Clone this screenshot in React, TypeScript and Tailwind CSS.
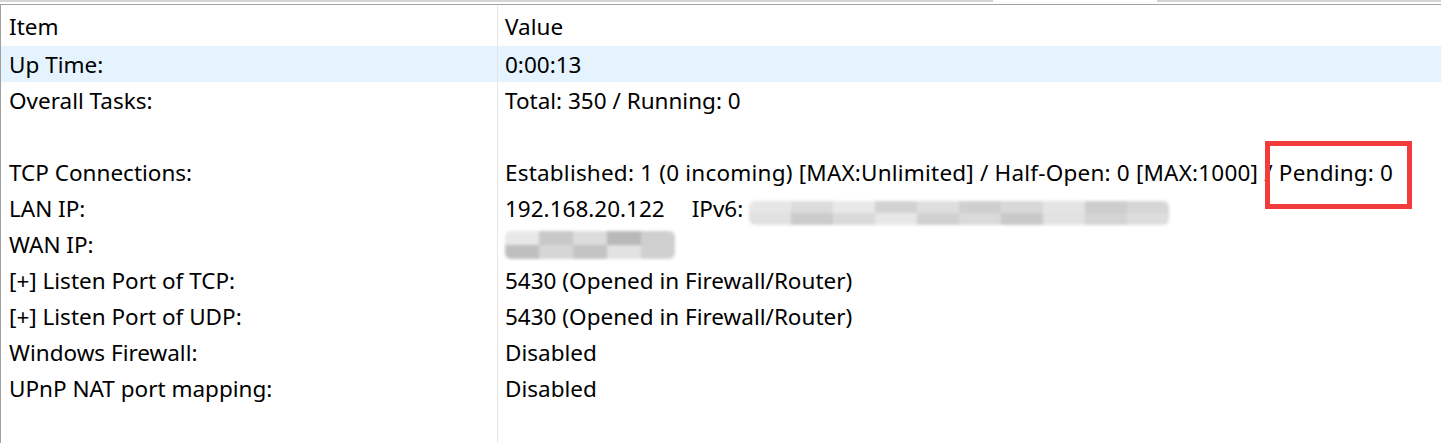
const ipv6Cells = ['#e6e6e6', '#dcdcdc', '#e9e9e9', '#d2d2d2', '#dedede', '#cfcfcf', '#d8d8d8', '#e4e4e4', '#cdcdcd', '#d6d6d6', '#e1e1e1', '#cbcbcb', '#d9d9d9', '#e7e7e7', '#d0d0d0', '#dadada', '#c9c9c9', '#e2e2e2', '#d4d4d4', '#dddddd'];
const wanCells = ['#e8e8e8', '#c8c8c8', '#dcdcdc', '#b9b9b9', '#cfcfcf', '#bfbfbf', '#d6d6d6', '#c4c4c4', '#e2e2e2', '#d0d0d0'];

function Pixelated({ cells, width, height }: { cells: string[]; width: number; height: number }) {
  const cw = width / (cells.length / 2);
  return (
    <span
      className="inline-grid align-middle blur-[1.5px] rounded-md overflow-hidden"
      style={{ width, height, gridTemplateColumns: `repeat(${cells.length / 2}, ${cw}px)` }}
    >
      {cells.map((c, i) => (
        <span key={i} style={{ background: c }} />
      ))}
    </span>
  );
}

export default function App() {
  const data: { item: string; value: React.ReactNode; hl?: boolean }[] = [
    { item: 'Up Time:', value: '0:00:13', hl: true },
    { item: 'Overall Tasks:', value: 'Total: 350 / Running: 0' },
    { item: '', value: '' },
    {
      item: 'TCP Connections:',
      value: (
        <span className="tracking-[0.2px]">
          Established: 1 (0 incoming) [MAX:Unlimited] / Half-Open: 0 [MAX:1000] / Pending: 0
        </span>
      ),
    },
    {
      item: 'LAN IP:',
      value: (
        <span className="flex items-center">
          <span>192.168.20.122</span>
          <span className="ml-[27px]">IPv6:</span>
          <span className="ml-[6px] mt-[4px]">
            <Pixelated cells={ipv6Cells} width={420} height={24} />
          </span>
        </span>
      ),
    },
    {
      item: 'WAN IP:',
      value: (
        <span className="flex items-center">
          <Pixelated cells={wanCells} width={170} height={28} />
        </span>
      ),
    },
    { item: '[+] Listen Port of TCP:', value: '5430 (Opened in Firewall/Router)' },
    { item: '[+] Listen Port of UDP:', value: '5430 (Opened in Firewall/Router)' },
    { item: 'Windows Firewall:', value: 'Disabled' },
    { item: 'UPnP NAT port mapping:', value: 'Disabled' },
  ];

  return (
    <div className="relative w-[1441px] h-[443px] bg-white overflow-hidden text-black text-[22.5px] font-['Segoe_UI','Noto_Sans',sans-serif]">
      {/* top strip */}
      <div className="flex h-[2px]">
        <div className="w-[993px] bg-[#d4d4d4]" />
        <div className="w-[164px]" />
        <div className="flex-1 bg-[#d4d4d4]" />
      </div>
      <div className="h-[2px]" />
      <div className="h-px bg-[#a0a0a0]" />

      <div className="relative border-l border-[#a0a0a0] h-[438px]">
        <div className="absolute left-[496px] top-0 bottom-0 w-px bg-[#e5e5e5]" />
        <div className="flex h-[41px] items-center pt-[2px]">
          <div className="w-[496px] pl-[8px]">Item</div>
          <div className="pl-[8px]">Value</div>
        </div>
        {data.map((r, i) => (
          <div key={i} className={`flex h-[36px] items-center pt-[2px] ${r.hl ? 'bg-[#e5f3fe]' : ''}`}>
            <div className="w-[496px] pl-[8px] whitespace-nowrap">{r.item}</div>
            <div className="pl-[8px] whitespace-nowrap">{r.value}</div>
          </div>
        ))}
      </div>

      <div className="absolute left-[1265px] top-[141px] w-[147px] h-[68px] border-[5px] border-[#f23b3b]" />
    </div>
  );
}
